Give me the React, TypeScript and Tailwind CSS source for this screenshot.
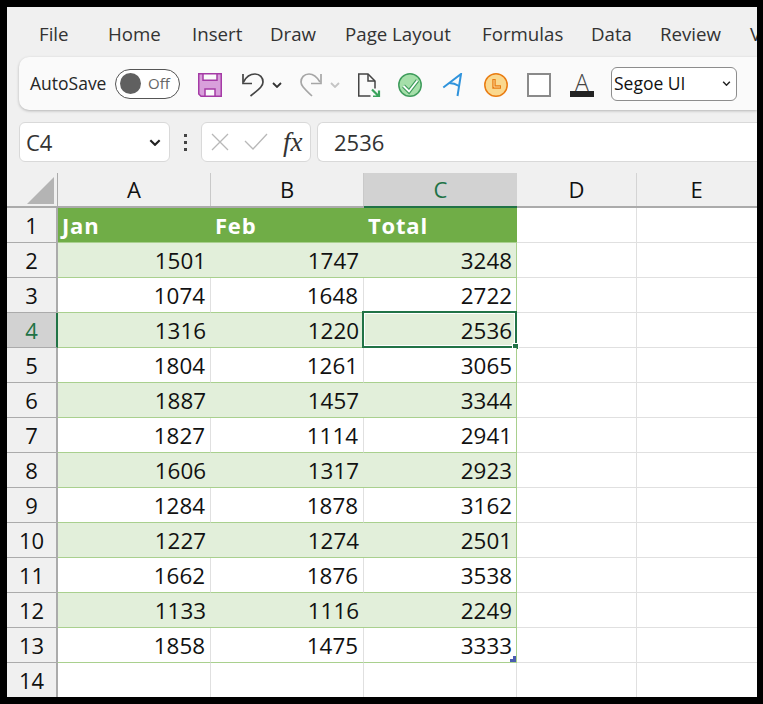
const tabs: [string, string][] = [
  ["File", "w-[69px]"],
  ["Home", "w-[84px]"],
  ["Insert", "w-[78px]"],
  ["Draw", "w-[75px]"],
  ["Page Layout", "w-[137px]"],
  ["Formulas", "w-[109px]"],
  ["Data", "w-[69px]"],
  ["Review", "w-[90px]"],
  ["V", "w-[20px]"],
];

const rows: (string | number)[][] = [
  [1501, 1747, 3248],
  [1074, 1648, 2722],
  [1316, 1220, 2536],
  [1804, 1261, 3065],
  [1887, 1457, 3344],
  [1827, 1114, 2941],
  [1606, 1317, 2923],
  [1284, 1878, 3162],
  [1227, 1274, 2501],
  [1662, 1876, 3538],
  [1133, 1116, 2249],
  [1858, 1475, 3333],
];

function Chevron({ color, className }: { color: string; className: string }) {
  return (
    <svg viewBox="0 0 10 6" className={className} fill="none" stroke={color} strokeWidth="1.8">
      <path d="M1 1l4 4 4-4" />
    </svg>
  );
}

function Toolbar() {
  return (
    <div className="ml-[12px] mt-[12px] h-[53px] rounded-l-[10px] bg-[#fafafa] shadow-[0_1px_3px_rgba(0,0,0,0.25)] flex items-center pl-[11px]">
      <span className="w-[85px] text-[17.5px] text-[#262626] shrink-0">AutoSave</span>
      <div className="w-[65px] h-[30px] shrink-0 rounded-full border border-[#555] flex items-center pl-[4px] gap-[7px] bg-white">
        <div className="w-[21px] h-[21px] rounded-full bg-[#606060]" />
        <span className="text-[15px] text-[#666]">Off</span>
      </div>
      <svg viewBox="0 0 24 24" className="w-[24px] h-[24px] ml-[18px] mt-[3px] shrink-0">
        <path d="M0.75 0.75H23.25V23.25H3L0.75 21Z" fill="#d89fdb" stroke="#a53ba6" strokeWidth="1.5" />
        <rect x="5" y="0.75" width="14" height="6.5" fill="#fafafa" stroke="#a53ba6" strokeWidth="1.5" />
        <rect x="7" y="16" width="10" height="7.25" fill="#fafafa" stroke="#a53ba6" strokeWidth="1.5" />
      </svg>
      <svg viewBox="0 0 24 24" className="w-[24px] h-[24px] ml-[20px] mt-[3px] shrink-0" fill="none" stroke="#444" strokeWidth="1.7">
        <path d="M1 1V10.5H10" />
        <path d="M1.5 9C4 4 8 1 13 1C18 1 21 4.5 21 9C21 12.5 19 15 8.5 23" />
      </svg>
      <Chevron color="#333" className="w-[10px] h-[6px] ml-[6px] mt-[3px] shrink-0" />
      <svg viewBox="0 0 24 24" className="w-[24px] h-[24px] ml-[18px] mt-[3px] shrink-0" fill="none" stroke="#a6a6a6" strokeWidth="1.7">
        <path d="M21 1V10.5H11" />
        <path d="M20 9C17 4 13 1 9 1C4 1 1 4.5 1 9C1 12 3 14.5 12 23" />
      </svg>
      <Chevron color="#c4c4c4" className="w-[10px] h-[6px] ml-[6px] mt-[3px] shrink-0" />
      <svg viewBox="0 0 24 24" className="w-[24px] h-[24px] ml-[18px] mt-[3px] shrink-0" fill="none">
        <path d="M12.5 23H0.75V1H10L17 8V15.5" stroke="#444" strokeWidth="1.5" />
        <path d="M10 1V8H17" stroke="#444" strokeWidth="1.5" />
        <path d="M14 16.5L20.5 23M21 17.5V23.5H15" stroke="#3aa35c" strokeWidth="2.2" />
      </svg>
      <svg viewBox="0 0 24 24" className="w-[24px] h-[24px] ml-[16px] mt-[3px] shrink-0" fill="none">
        <circle cx="12" cy="12" r="11.2" fill="#a5dfa9" stroke="#3f9c5c" strokeWidth="1.5" />
        <path d="M5.5 13L11 18.5L19.5 7.5" stroke="#3f9c5c" strokeWidth="4" />
        <path d="M5.5 13L11 18.5L19.5 7.5" stroke="#fff" strokeWidth="1.8" />
      </svg>
      <svg viewBox="0 0 24 24" className="w-[24px] h-[24px] ml-[20px] mt-[3px] shrink-0" fill="none" stroke="#2f93dc" strokeWidth="2">
        <path d="M1.3 14.5L19 1L15.5 23" />
        <path d="M7 10C10 10 14 11 17 13" />
      </svg>
      <svg viewBox="0 0 24 24" className="w-[24px] h-[24px] ml-[18px] mt-[3px] shrink-0" fill="none">
        <circle cx="12" cy="12" r="11.2" fill="#fad88e" stroke="#e97c12" strokeWidth="1.5" />
        <path d="M10 6V14H17" stroke="#e97c12" strokeWidth="3.4" />
        <path d="M10 7V14H16" stroke="#fde2a8" strokeWidth="0.9" />
      </svg>
      <div className="w-[24px] h-[24px] ml-[19px] mt-[3px] shrink-0 border-2 border-[#8a8a8a] bg-white" />
      <div className="w-[24px] h-[24px] ml-[19px] mt-[3px] shrink-0 flex flex-col items-center justify-end">
        <span className="text-[23px] leading-[18px] font-light text-[#444]">A</span>
        <div className="w-[24px] h-[6px] bg-[#222]" />
      </div>
      <div className="w-[126px] h-[34px] ml-[17px] shrink-0 rounded-[6px] border border-[#8d8d8d] bg-white flex items-center justify-between pl-[2px] pr-[5px]">
        <span className="text-[17.5px] text-[#111]">Segoe UI</span>
        <Chevron color="#222" className="w-[9px] h-[5px]" />
      </div>
    </div>
  );
}

function FormulaBar() {
  return (
    <div className="ml-[12px] mt-[12px] h-[40px] flex">
      <div className="w-[151px] rounded-[6px] border border-[#d9d9d9] bg-white flex items-center justify-between pl-[6px] pr-[8px]">
        <span className="text-[22px] text-[#333]">C4</span>
        <Chevron color="#222" className="w-[12px] h-[7px]" />
      </div>
      <div className="w-[31px] flex flex-col items-center justify-center gap-[4px]">
        <div className="w-[3px] h-[3px] bg-[#444]" />
        <div className="w-[3px] h-[3px] bg-[#444]" />
        <div className="w-[3px] h-[3px] bg-[#444]" />
      </div>
      <div className="w-[110px] rounded-[6px] border border-[#d9d9d9] bg-white flex items-center pl-[9px]">
        <svg viewBox="0 0 18 18" className="w-[18px] h-[18px]" fill="none" stroke="#b8b8b8" strokeWidth="1.3">
          <path d="M1 1L17 17M17 1L1 17" />
        </svg>
        <svg viewBox="0 0 24 18" className="w-[24px] h-[18px] ml-[15px]" fill="none" stroke="#b8b8b8" strokeWidth="1.3">
          <path d="M1 8L9 16L23 1" />
        </svg>
        <span className="ml-[15px] text-[27px] leading-none italic text-[#333]" style={{ fontFamily: '"Liberation Serif", serif' }}>fx</span>
      </div>
      <div className="ml-[6px] flex-1 rounded-l-[6px] border border-r-0 border-[#d9d9d9] bg-white flex items-center pl-[16px]">
        <span className="text-[22px] text-[#333]">2536</span>
      </div>
    </div>
  );
}

function ColHeaders() {
  return (
    <div className="mt-[11px] h-[35px] flex border-b-2 border-[#ababab]">
      <div className="w-[51px] shrink-0 flex items-end justify-end pr-[3px] pb-[2px] border-r border-[#ababab] relative">
        <svg viewBox="0 0 27 27" className="w-[27px] h-[27px]">
          <path d="M27 0V27H0Z" fill="#b4b4b4" />
        </svg>
      </div>
      {["A", "B"].map((c) => (
        <div key={c} className="w-[153px] shrink-0 flex items-center justify-center border-r border-[#c9c9c9] text-[22px] text-[#111]">{c}</div>
      ))}
      <div className="w-[153px] h-[35px] shrink-0 flex items-center justify-center bg-[#d2d2d2] border-b-2 border-[#217346] text-[22px] text-[#217346]">C</div>
      <div className="w-[120px] shrink-0 flex items-center justify-center border-r border-[#d4d4d4] text-[22px] text-[#111]">D</div>
      <div className="flex-1 flex items-center justify-center pr-[1px] text-[22px] text-[#111]">E</div>
    </div>
  );
}

function RowHead({ n, selected }: { n: number; selected?: boolean }) {
  return (
    <div
      className={
        selected
          ? "w-[51px] shrink-0 flex items-center justify-center bg-[#d2d2d2] border-r-2 border-[#217346] border-b border-b-[#ababab] text-[22px] text-[#217346]"
          : "w-[51px] shrink-0 flex items-center justify-center bg-[#f0f0f0] border-r-2 border-[#ababab] border-b border-b-[#ababab] text-[22px] text-[#111]"
      }
    >
      {n}
    </div>
  );
}

function EmptyTail() {
  return (
    <>
      <div className="w-[120px] shrink-0 border-r border-b border-[#e0e0e0]" />
      <div className="flex-1 border-b border-[#e0e0e0]" />
    </>
  );
}

function Sheet() {
  return (
    <div className="bg-white">
      <div className="h-[35px] flex">
        <RowHead n={1} />
        {["Jan", "Feb", "Total"].map((t) => (
          <div key={t} className="w-[153px] shrink-0 bg-[#70ad47] border-b border-[#a9d08e] flex items-center pl-[4px] text-[22px] tracking-[0.8px] font-bold text-white">
            {t}
          </div>
        ))}
        <EmptyTail />
      </div>
      {rows.map((r, i) => {
        const band = i % 2 === 0;
        const selected = i === 2;
        return (
          <div key={i} className="h-[35px] flex">
            <RowHead n={i + 2} selected={selected} />
            {r.map((v, j) => (
              <div
                key={j}
                className={
                  (band ? "bg-[#e2efda] " : "bg-white ") +
                  (j === 2 ? "border-r border-r-[#a9d08e] " : band ? "" : "border-r border-r-[#e0e0e0] ") +
                  (j === 2 ? "pr-[4px] " : "pr-[5px] ") +
                  "relative w-[153px] pt-[1px] shrink-0 border-b border-b-[#a9d08e] flex items-center justify-end text-[22.4px] text-[#111]"
                }
              >
                {v}
                {selected && j === 2 && (
                  <>
                    <div className="absolute -left-[2px] -top-[2px] -right-[1px] -bottom-[1px] border-2 border-[#217346] shadow-[inset_0_0_0_1px_#fff]" />
                    <div className="absolute -right-[3px] -bottom-[3px] w-[7px] h-[7px] bg-[#217346] border border-white" />
                  </>
                )}
                {i === 11 && j === 2 && (
                  <svg viewBox="0 0 6 6" className="absolute right-0 bottom-0 w-[6px] h-[6px]">
                    <path d="M6 0V6H0V3H3V0Z" fill="#4a5cb0" />
                  </svg>
                )}
              </div>
            ))}
            <EmptyTail />
          </div>
        );
      })}
      <div className="h-[35px] flex">
        <RowHead n={14} />
        <div className="w-[153px] shrink-0 border-r border-[#e0e0e0]" />
        <div className="w-[153px] shrink-0 border-r border-[#e0e0e0]" />
        <div className="w-[153px] shrink-0 border-r border-[#e0e0e0]" />
        <div className="w-[120px] shrink-0 border-r border-[#e0e0e0]" />
        <div className="flex-1" />
      </div>
    </div>
  );
}

export default function App() {
  return (
    <div className="w-[763px] h-[704px] bg-black pt-[7px] pl-[7px] pr-[6px] pb-[7px]" style={{ fontFamily: '"Open Sans", "Noto Sans", sans-serif' }}>
      <div className="w-full h-full bg-[#f0f0f0] overflow-hidden">
        <div className="h-[38px] flex items-center pl-[32px] pt-[16px] whitespace-nowrap text-[18.7px] text-[#333]">
          {tabs.map(([t, w]) => (
            <div key={t} className={w + " shrink-0"}>{t}</div>
          ))}
        </div>
        <Toolbar />
        <FormulaBar />
        <ColHeaders />
        <Sheet />
      </div>
    </div>
  );
}
